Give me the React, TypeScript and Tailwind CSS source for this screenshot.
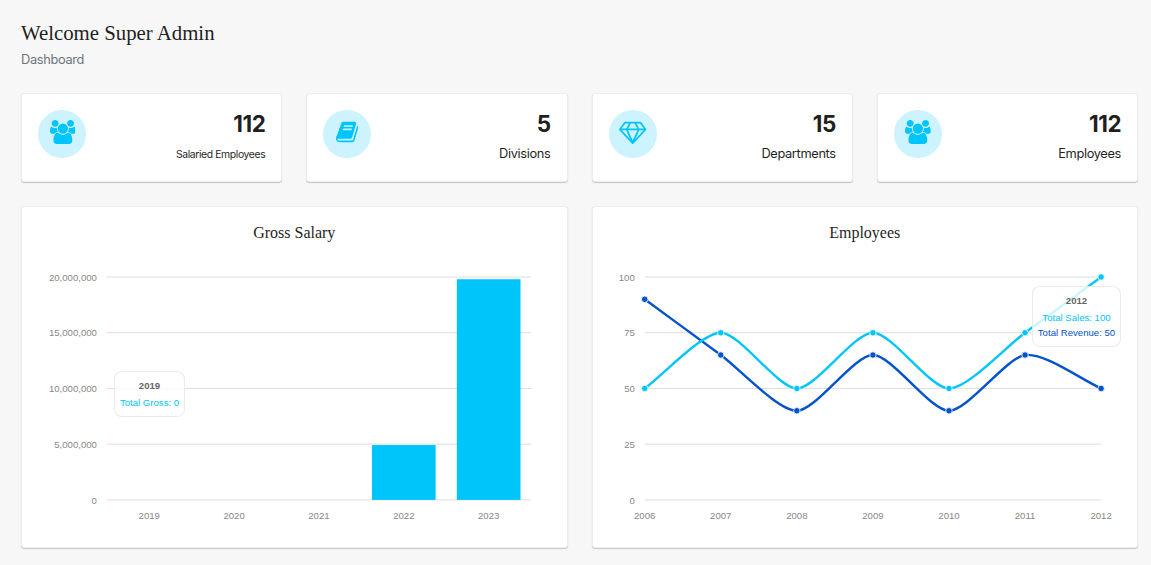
import React from "react";

const USERS =
  "M593 896q-162 5-265 128H194q-82 0-138-40.5T0 865q0-353 124-353 6 0 43.5 21t97.5 42.5T384 597q67 0 133-23-5 37-5 66 0 139 81 256zm1071 637q0 120-73 189.5t-194 69.5H523q-121 0-194-69.5T256 1533q0-53 3.5-103.5t14-109T300 1212t43-97.5 62-81 85.5-53.5T602 960q10 0 43 21.5t73 48 107 48T960 1099t135-21.5 107-48 73-48 43-21.5q61 0 111.5 20t85.5 53.5 62 81 43 97.5 26.5 108.5 14 109 3.5 103.5zM640 256q0 106-75 181t-181 75-181-75-75-181 75-181T384 0t181 75 75 181zm704 384q0 159-112.5 271.5T960 1024 688.5 911.5 576 640t112.5-271.5T960 256t271.5 112.5T1344 640zm576 225q0 78-56 118.5t-138 40.5h-134q-103-123-265-128 81-117 81-256 0-29-5-66 66 23 133 23 59 0 119-21.5t97.5-42.5 43.5-21q124 0 124 353zm-128-609q0 106-75 181t-181 75-181-75-75-181 75-181 181-75 181 75 75 181z";
const BOOK =
  "M1639 478q40 57 18 129l-275 906q-19 64-76.5 107.5t-122.5 43.5h-923q-77 0-148.5-53.5t-99.5-131.5q-24-67-2-127 0-4 3-27t4-37q1-8-3-21.5t-3-19.5q2-11 8-21t16.5-23.5 16.5-23.5q23-38 45-91.5t30-91.5q3-10 .5-30t-.5-28q3-11 17-28t17-23q21-36 42-92t25-90q1-9-2.5-32t.5-28q4-13 22-30.5t22-22.5q19-26 42.5-84.5t27.5-96.5q1-8-3-25.5t-2-26.5q2-8 9-18t18-23 17-21q8-12 16.5-30.5t15-35 16-36 19.5-32 26.5-23.5 36-11.5 47.5 5.5l-1 3q38-9 51-9h761q74 0 114 56t18 130l-274 906q-36 119-71.5 153.5t-128.5 34.5h-869q-27 0-38 15-11 16-1 43 24 70 144 70h923q29 0 56-15.5t35-41.5l300-987q7-22 5-57 38 15 59 43zm-1064 2q-4 13 2 22.5t20 9.5h608q13 0 25.5-9.5t16.5-22.5l21-64q4-13-2-22.5t-20-9.5h-608q-13 0-25.5 9.5t-16.5 22.5zm-83 256q-4 13 2 22.5t20 9.5h608q13 0 25.5-9.5t16.5-22.5l21-64q4-13-2-22.5t-20-9.5h-608q-13 0-25.5 9.5t-16.5 22.5z";
const DIAMOND =
  "M212 768l623 665-300-665H212zm812 772l349-772H675zM538 640l204-384H480L192 640h346zm675 793l623-665h-323zM683 640h682l-204-384H887zm827 0h346l-288-384h-262zm141-486l384 512q14 18 13 41.5t-17 40.5l-960 1024q-18 20-47 20t-47-20L17 748Q1 731 0 707.5T13 666l384-512q18-26 51-26h1152q33 0 51 26z";

const CARD =
  "rounded-[3px] border border-[#ededed] bg-white shadow-[0_1px_1px_0_rgba(0,0,0,0.2)]";

type Stat = { value: string; label: string; icon: string; width: number; small?: boolean };

const stats: Stat[] = [
  { value: "112", label: "Salaried Employees", icon: USERS, width: 1920, small: true },
  { value: "5", label: "Divisions", icon: BOOK, width: 1664 },
  { value: "15", label: "Departments", icon: DIAMOND, width: 2048 },
  { value: "112", label: "Employees", icon: USERS, width: 1920 },
];

function StatCard({ stat }: { stat: Stat }) {
  return (
    <div className={`${CARD} flex h-[89px] justify-between p-4`}>
      <span
        className={`flex size-12 items-center justify-center rounded-full bg-[#ccf3fe] pb-[4px] ${
          stat.icon === BOOK ? "pl-0" : "pl-[1px]"
        }`}
      >
        <svg
          width={(stat.width * 24) / 1792}
          height="24"
          viewBox={`0 0 ${stat.width} 1792`}
          fill="#00c5fb"
        >
          <path d={stat.icon} />
        </svg>
      </span>
      <div className="flex flex-col items-end text-[#1f1f1f]">
        <h3 className="h-[27px] font-['Inter',sans-serif] text-[22.4px] leading-[28px] font-bold tracking-[-0.5px]">
          {stat.value}
        </h3>
        <span
          className={
            stat.small
              ? "mt-[8px] font-['Inter',sans-serif] text-[10.4px] leading-5 tracking-[-0.39px]"
              : "mt-[7px] font-['Inter',sans-serif] text-[12.8px] leading-5 tracking-[-0.34px]"
          }
        >
          {stat.label}
        </span>
      </div>
    </div>
  );
}

const BASE = 499.9;
const TOP = 277;
const yAt = (v: number, max: number) => BASE - ((BASE - TOP) * v) / max;

function Grid({ labels, x1, x2 }: { labels: string[]; x1: number; x2: number }) {
  return (
    <>
      {labels.map((label, i) => {
        const y = BASE - ((BASE - TOP) * i) / 4;
        return (
          <g key={label}>
            <text x={x1 - 9.9} y={y + 3.7} textAnchor="end">
              {label}
            </text>
            <path d={`M${x1} ${y}H${x2}`} stroke="#aaaaaa" strokeWidth="0.4" />
          </g>
        );
      })}
    </>
  );
}

function BarChart() {
  const data = [0, 0, 0, 4920000, 19800000];
  const left = 106.7;
  const col = 84.86;
  return (
    <svg
      className="block h-[303px] w-full font-['Liberation_Sans',sans-serif] text-[9.6px]"
      viewBox="21.9 244 544.5 303"
      preserveAspectRatio="xMinYMin meet"
      fill="#888888"
    >
      <Grid
        labels={["0", "5,000,000", "10,000,000", "15,000,000", "20,000,000"]}
        x1={left}
        x2={531}
      />
      {data.map((v, i) => {
        const y = yAt(v, 20000000);
        return (
          <g key={i}>
            <rect x={left + col * (i + 0.125)} y={y} width={col * 0.75} height={BASE - y} fill="#00c5fb" />
            <text x={left + col * (i + 0.5)} y="519.2" textAnchor="middle">
              {2019 + i}
            </text>
          </g>
        );
      })}
    </svg>
  );
}

type Point = { x: number; y: number };

function smooth(p: Point[]) {
  const slope = p.map((_, i) => {
    const a = p[Math.max(0, i - 1)];
    const b = p[Math.min(p.length - 1, i + 1)];
    return (b.y - a.y) / (b.x - a.x);
  });
  return p
    .map((c, i) => {
      if (i === 0) return `M${c.x} ${c.y}`;
      const a = p[i - 1];
      const d = (c.x - a.x) / 4;
      return `C${a.x + d} ${a.y + d * slope[i - 1]} ${c.x - d} ${c.y - d * slope[i]} ${c.x} ${c.y}`;
    })
    .join("");
}

function LineChart() {
  const left = 644.7;
  const step = 76.07;
  const series = [
    { color: "#0253cc", data: [90, 65, 40, 65, 40, 65, 50] },
    { color: "#00c5fb", data: [50, 75, 50, 75, 50, 75, 100] },
  ].map((s) => ({
    color: s.color,
    points: s.data.map((v, i) => ({ x: left + step * i, y: yAt(v, 100) })),
  }));
  return (
    <svg
      className="block h-[303px] w-full font-['Liberation_Sans',sans-serif] text-[9.6px]"
      viewBox="593 244 544.5 303"
      preserveAspectRatio="xMinYMin meet"
      fill="#888888"
    >
      <Grid labels={["0", "25", "50", "75", "100"]} x1={left} x2={1101.1} />
      {series.map((s) => (
        <path key={s.color} d={smooth(s.points)} fill="none" stroke={s.color} strokeWidth="2.4" />
      ))}
      {series.map((s) =>
        s.points.map((c) => (
          <circle
            key={s.color + c.x}
            cx={c.x}
            cy={c.y}
            r="3.2"
            fill={s.color}
            stroke="#ffffff"
            strokeWidth="0.8"
          />
        )),
      )}
      {series[0].points.map((c, i) => (
        <text key={i} x={c.x} y="519.2" textAnchor="middle">
          {2006 + i}
        </text>
      ))}
    </svg>
  );
}

const TIP =
  "absolute rounded-[8px] border border-[#e6e6e6]/80 bg-white/80 text-center font-['Liberation_Sans',sans-serif] text-[9.6px] whitespace-nowrap";

export default function App() {
  return (
    <main className="h-[565px] w-full overflow-hidden bg-[#f7f7f7] pt-[20px] pr-[13px] pl-[21px]">
      <header className="h-[73px]">
        <h1 className="font-['Liberation_Serif',serif] text-[20.8px] leading-[25px] text-[#1f1f1f]">
          Welcome Super Admin
        </h1>
        <p className="mt-[5px] font-['Inter',sans-serif] text-[12.8px] leading-5 tracking-[-0.32px] text-[#6c757d]">
          Dashboard
        </p>
      </header>
      <section className="grid grid-cols-4 gap-6">
        {stats.map((stat, i) => (
          <StatCard key={i} stat={stat} />
        ))}
      </section>
      <section className="mt-6 grid grid-cols-2 gap-6">
        <div className={`${CARD} relative h-[342px] pt-[15px]`}>
          <h2 className="h-[22px] text-center font-['Liberation_Serif',serif] text-[16px] leading-[22px] text-[#1f1f1f]">
            Gross Salary
          </h2>
          <BarChart />
          <div className={`${TIP} top-[164px] left-[92px] h-[46px] w-[71px]`}>
            <div className="mt-[7px] leading-[14px] font-bold text-[#666666]">2019</div>
            <div className="mt-[3px] leading-[14px] text-[#00c5fb]">Total Gross: 0</div>
          </div>
        </div>
        <div className={`${CARD} relative h-[342px] pt-[15px]`}>
          <h2 className="h-[22px] text-center font-['Liberation_Serif',serif] text-[16px] leading-[22px] text-[#1f1f1f]">
            Employees
          </h2>
          <LineChart />
          <div className={`${TIP} top-[79px] right-[16px] h-[61px] w-[89px]`}>
            <div className="mt-[7px] leading-[14px] font-bold text-[#666666]">2012</div>
            <div className="mt-[3px] leading-[14px] text-[#00c5fb]">Total Sales: 100</div>
            <div className="mt-[1px] leading-[14px] text-[#0253cc]">Total Revenue: 50</div>
          </div>
        </div>
      </section>
    </main>
  );
}
